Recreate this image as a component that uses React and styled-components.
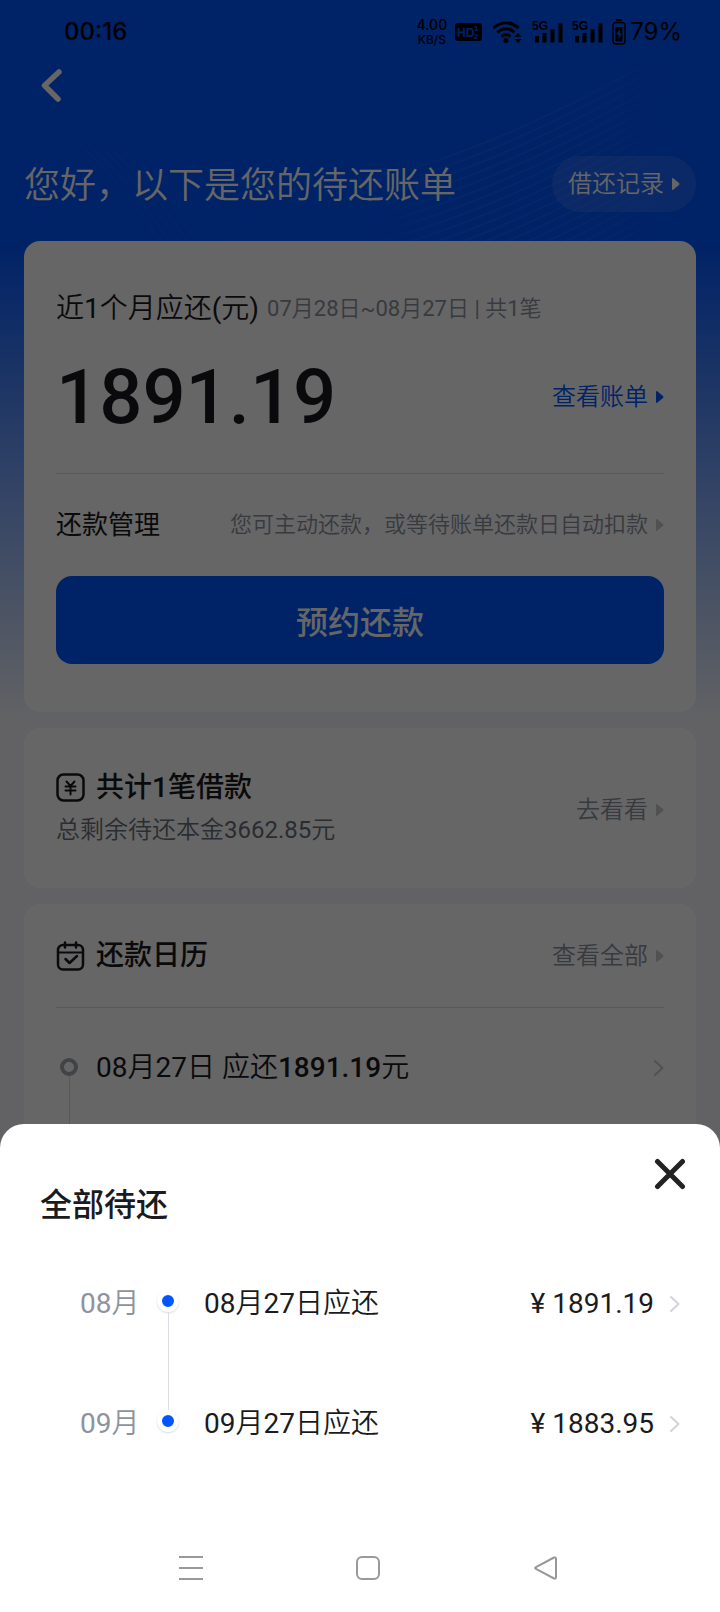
import React from "react";
import styled, { createGlobalStyle } from "styled-components";

const COLORS = {
  blue: "#0055ff",
  ink: "#1a1b20",
  grey: "#8d92a1",
  slate: "#6b6f7c",
  arrow: "#cacbd0",
  line: "#dcdde2",
};

const FONTS = {
  text: `Roboto, "Noto Sans CJK SC DemiLight", "Noto Sans CJK SC", sans-serif`,
  heading: `Roboto, "Noto Sans CJK SC", sans-serif`,
};

const PAYMENTS = [
  { month: "08月", label: "08月27日应还", amount: "1891.19" },
  { month: "09月", label: "09月27日应还", amount: "1883.95" },
];

const RIGHT_WAVES = Array.from({ length: 20 }, (_, i) => i * 9);
const LEFT_WAVES = Array.from({ length: 5 }, (_, i) => i * 9);

const Waves = () => (
  <WaveSvg viewBox="0 0 720 241" preserveAspectRatio="xMaxYMin slice" aria-hidden="true">
    <defs>
      <linearGradient id="fade" gradientUnits="userSpaceOnUse" x1="340" y1="0" x2="690" y2="0">
        <stop offset="0" stopColor="#fff" stopOpacity="0" />
        <stop offset="0.4" stopColor="#fff" stopOpacity="0.07" />
        <stop offset="0.7" stopColor="#fff" stopOpacity="0.06" />
        <stop offset="1" stopColor="#fff" stopOpacity="0" />
      </linearGradient>
    </defs>
    {RIGHT_WAVES.map((d) => (
      <path
        key={d}
        d={`M340 ${188 + d} C440 ${166 + d} 540 ${126 + d} 690 ${40 + d}`}
        fill="none"
        stroke="url(#fade)"
        strokeWidth="2"
      />
    ))}
    {LEFT_WAVES.map((d) => (
      <path
        key={d}
        d={`M${80 + d} 145 Q${120 + d} 180 ${160 + d} 241`}
        fill="none"
        stroke="#fff"
        strokeOpacity="0.03"
        strokeWidth="2"
      />
    ))}
  </WaveSvg>
);

const Signal = () => (
  <svg width="32" height="24" viewBox="0 0 32 24" aria-hidden="true">
    <text x="0" y="10" fontSize="12" fontWeight="700" fontFamily="Liberation Sans, sans-serif">5G</text>
    <path d="M5 22.500V16M12.500 22.500V13M20.500 22.500V9.500M28.500 22.500V3.500" stroke="#000" strokeWidth="4" />
  </svg>
);

const Triangle = () => (
  <svg width="8" height="14" viewBox="0 0 8 14" aria-hidden="true">
    <path d="M0 2v10q0 1.500 1.500.5l5.500-4.500q1-1 0-2L1.500 1.500Q0 .5 0 2z" fill="currentColor" />
  </svg>
);

const Chevron = () => (
  <svg width="10" height="18" viewBox="0 0 10 18" aria-hidden="true">
    <path d="M1 2l7.500 7L1 16" fill="none" stroke="currentColor" strokeWidth="2" strokeLinecap="round" strokeLinejoin="round" />
  </svg>
);

const App = () => (
  <>
    <GlobalStyle />
    <Page>
      <Waves />
      <StatusBar>
        <Clock>00:16</Clock>
        <StatusIcons>
          <Speed>
            <b>4.00</b>
            <span>KB/S</span>
          </Speed>
          <svg width="27" height="18" viewBox="0 0 27 18" aria-hidden="true">
            <rect width="27" height="18" rx="3" />
            <g fill="#0055ff" fontFamily="Liberation Sans, sans-serif" fontWeight="700">
              <text x="2" y="14" fontSize="12">HD</text>
              <text x="19" y="8" fontSize="8">1</text>
              <text x="19" y="16" fontSize="8">2</text>
            </g>
          </svg>
          <Wifi width="30" height="24" viewBox="0 0 30 24" aria-hidden="true">
            <path d="M1.500 8Q14 -2.500 26.500 8M5.500 12.500Q14 5 22.500 12.500M9.500 16.500Q14 13 18.500 16.500" fill="none" stroke="#000" strokeWidth="3" />
            <circle cx="14" cy="20.500" r="2.500" />
            <path d="M22.500 17l3.500-4 3.500 4zM22.500 19l3.500 4 3.500-4z" />
          </Wifi>
          <Signal />
          <Signal />
          <svg width="14" height="26" viewBox="0 0 14 26" aria-hidden="true">
            <path d="M4 1h6" stroke="#000" strokeWidth="2" />
            <rect x="1" y="3.500" width="12" height="21.500" rx="3" fill="none" stroke="#000" strokeWidth="1.500" />
            <rect x="3.500" y="8" width="7" height="14.500" rx="1" />
            <path d="M8 10l-4 5.500h2.500V20l4-5.500H8z" fill="#0055ff" />
          </svg>
          <Battery>79%</Battery>
        </StatusIcons>
      </StatusBar>

      <NavBar>
        <IconButton aria-label="返回">
          <svg width="24" height="36" viewBox="0 0 24 36" aria-hidden="true">
            <path d="M19 4L4.500 17.500l13.500 13.500" fill="none" stroke="#fff" strokeWidth="5.500" strokeLinecap="round" strokeLinejoin="round" />
          </svg>
        </IconButton>
      </NavBar>

      <Header>
        <Greeting>您好，以下是您的待还账单</Greeting>
        <Pill href="#records">
          借还记录
          <Triangle />
        </Pill>
      </Header>

      <Cards>
        <Card>
          <Summary>
            <Label>近1个月应还(元)</Label>
            <Period>07月28日~08月27日 | 共1笔</Period>
          </Summary>
          <AmountRow>
            <Amount>1891.19</Amount>
            <MoreLink href="#bill" $color={COLORS.blue}>
              查看账单
              <Triangle />
            </MoreLink>
          </AmountRow>
          <Divider />
          <ManageRow>
            <ManageTitle>还款管理</ManageTitle>
            <MoreLink href="#manage" $small>
              您可主动还款，或等待账单还款日自动扣款
              <Arrow><Triangle /></Arrow>
            </MoreLink>
          </ManageRow>
          <PrimaryButton>预约还款</PrimaryButton>
        </Card>

        <LoanCard>
          <div>
            <CardTitle>
              <svg width="30" height="30" viewBox="0 0 30 30" aria-hidden="true">
                <g fill="none" stroke="currentColor" strokeWidth="2.500" strokeLinecap="round">
                  <rect x="1.500" y="1.500" width="26" height="26" rx="6" />
                  <path d="M10.500 8.500l4 4.500 4-4.500M14.500 13v8.500M9.500 13.500h10M9.500 17.500h10" strokeWidth="2" />
                </g>
              </svg>
              共计1笔借款
            </CardTitle>
            <LoanRest>总剩余待还本金3662.85元</LoanRest>
          </div>
          <MoreLink href="#loans">
            去看看
            <Arrow><Triangle /></Arrow>
          </MoreLink>
        </LoanCard>

        <CalendarCard>
          <CalendarHead>
            <CardTitle>
              <svg width="30" height="30" viewBox="0 0 30 30" aria-hidden="true">
                <g fill="none" stroke="currentColor" strokeWidth="2.500" strokeLinecap="round" strokeLinejoin="round">
                  <rect x="2" y="4" width="25" height="24.500" rx="5" />
                  <path d="M2 11.500h25" strokeWidth="2" />
                  <path d="M9 1.500v5M20 1.500v5M9.500 18l4 4 7.500-7" />
                </g>
              </svg>
              还款日历
            </CardTitle>
            <MoreLink href="#all">
              查看全部
              <Arrow><Triangle /></Arrow>
            </MoreLink>
          </CalendarHead>
          <Divider />
          <DueItem>
            <Rail>
              <Ring />
            </Rail>
            <DueText>
              08月27日 应还<b>1891.19</b>元
            </DueText>
            <Arrow><Chevron /></Arrow>
          </DueItem>
        </CalendarCard>
      </Cards>
    </Page>

    <Overlay />

    <Sheet role="dialog" aria-labelledby="sheet-title">
      <SheetHeader>
        <SheetTitle id="sheet-title">全部待还</SheetTitle>
        <IconButton aria-label="关闭">
          <svg width="32" height="32" viewBox="0 0 32 32" aria-hidden="true">
            <path d="M3.500 3.500l25 25M28.500 3.500l-25 25" stroke="#222" strokeWidth="5" strokeLinecap="round" />
          </svg>
        </IconButton>
      </SheetHeader>
      <PaymentList>
        {PAYMENTS.map(({ month, label, amount }) => (
          <Payment key={month}>
            <Month>{month}</Month>
            <DotRail>
              <Dot />
            </DotRail>
            <PaymentName>{label}</PaymentName>
            <span>¥ {amount}</span>
            <PaymentArrow><Chevron /></PaymentArrow>
          </Payment>
        ))}
      </PaymentList>
      <SystemNav>
        <IconButton aria-label="菜单">
          <svg width="26" height="26" viewBox="0 0 26 26" aria-hidden="true">
            <path d="M1 2h24M1 13h24M1 24h24" stroke="#999" strokeWidth="2" />
          </svg>
        </IconButton>
        <IconButton aria-label="主页">
          <svg width="26" height="26" viewBox="0 0 26 26" aria-hidden="true">
            <rect x="2" y="2" width="22" height="22" rx="5" fill="none" stroke="#999" strokeWidth="2" />
          </svg>
        </IconButton>
        <IconButton aria-label="上一页">
          <svg width="26" height="26" viewBox="0 0 26 26" aria-hidden="true">
            <path d="M21 2.500L3 12q-1.500 1 0 2l18 9.500q2 .5 2-1.500V4q0-2-2-1.500z" fill="none" stroke="#999" strokeWidth="2" />
          </svg>
        </IconButton>
      </SystemNav>
    </Sheet>
  </>
);

const GlobalStyle = createGlobalStyle`
  * {
    box-sizing: border-box;
  }

  body {
    margin: 0;
    color: ${COLORS.ink};
    font-family: ${FONTS.text};
    font-size: 28px;
    line-height: 40px;
  }

  svg {
    display: block;
    flex: none;
  }
`;

const Page = styled.div`
  position: relative;
  display: flex;
  flex-direction: column;
  min-height: 100vh;
  background: linear-gradient(${COLORS.blue} 240px, #f5f6fa 720px);
`;

const WaveSvg = styled.svg`
  position: absolute;
  top: 0;
  right: 0;
  width: 100%;
  height: 241px;
`;

const StatusBar = styled.div`
  display: flex;
  align-items: center;
  justify-content: space-between;
  height: 64px;
  padding: 0 38px 0 64px;
  color: #000;
  font-family: Inter, sans-serif;
  font-size: 24px;
`;

const Clock = styled.span`
  font-weight: 500;
`;

const StatusIcons = styled.div`
  display: flex;
  align-items: center;
  gap: 8px;
`;

const Speed = styled.div`
  display: flex;
  flex-direction: column;
  align-items: center;
  font-size: 12px;
  font-weight: 500;
  line-height: 14px;

  b {
    font-size: 14px;
    font-weight: 500;
    line-height: 16px;
  }
`;

const Wifi = styled.svg`
  margin: 0 2px;
`;

const Battery = styled.span`
  margin-left: -4px;
`;

const NavBar = styled.nav`
  display: flex;
  align-items: center;
  height: 44px;
  padding: 0 40px;
`;

const IconButton = styled.button`
  display: flex;
  padding: 0;
  border: none;
  background: none;
  cursor: pointer;
`;

const Header = styled.header`
  display: flex;
  align-items: center;
  justify-content: space-between;
  padding: 48px 24px 29px;
  color: #fff;
`;

const Greeting = styled.h1`
  margin: 0;
  padding-top: 4px;
  font-size: 36px;
  font-weight: 400;
  line-height: 52px;
`;

const Pill = styled.a`
  display: flex;
  align-items: center;
  gap: 8px;
  height: 56px;
  padding: 0 16px;
  border-radius: 28px;
  background: rgba(255, 255, 255, 0.1);
  color: #fff;
  font-size: 24px;
  text-decoration: none;
`;

const Cards = styled.main`
  position: relative;
  display: flex;
  flex: 1;
  flex-direction: column;
  gap: 16px;
  padding: 0 24px;
`;

const Card = styled.section`
  padding: 48px 32px;
  border-radius: 16px;
  background: #fff;
`;

const Summary = styled.div`
  display: flex;
  align-items: center;
  gap: 8px;
`;

const Label = styled.span`
  color: ${COLORS.ink};
`;

const Period = styled.span`
  color: ${COLORS.grey};
  font-size: 22px;
`;

const AmountRow = styled.div`
  display: flex;
  align-items: center;
  justify-content: space-between;
  height: 96px;
  margin: 20px 0 28px;
`;

const Amount = styled.strong`
  font-size: 76px;
  font-weight: 500;
  line-height: 96px;
`;

const MoreLink = styled.a`
  display: flex;
  align-items: center;
  gap: 8px;
  color: ${({ $color }) => $color || COLORS.grey};
  font-size: ${({ $small }) => ($small ? "22px" : "24px")};
  text-decoration: none;
`;

const Arrow = styled.span`
  display: flex;
  color: ${COLORS.arrow};
`;

const Divider = styled.hr`
  width: 100%;
  height: 1px;
  margin: 0;
  border: none;
  background: ${COLORS.line};
`;

const ManageRow = styled.div`
  display: flex;
  align-items: center;
  justify-content: space-between;
  height: 102px;
`;

const ManageTitle = styled.h2`
  margin: 0;
  font-family: ${FONTS.heading};
  font-size: 26px;
  font-weight: 400;
`;

const PrimaryButton = styled.button`
  width: 100%;
  height: 88px;
  border: none;
  border-radius: 16px;
  background: ${COLORS.blue};
  color: #fff;
  font-family: ${FONTS.heading};
  font-size: 32px;
  font-weight: 500;
  cursor: pointer;
`;

const LoanCard = styled(Card)`
  display: flex;
  align-items: center;
  justify-content: space-between;
  padding: 40px 32px 36px;
`;

const CardTitle = styled.h2`
  display: flex;
  align-items: center;
  gap: 10px;
  margin: 0;
  font-family: ${FONTS.heading};
  font-size: 28px;
  font-weight: 500;
`;

const LoanRest = styled.p`
  margin: 0;
  color: ${COLORS.slate};
  font-size: 24px;
  line-height: 44px;
`;

const CalendarCard = styled(Card)`
  display: flex;
  flex: 1;
  flex-direction: column;
  padding: 0 32px;
`;

const CalendarHead = styled.div`
  display: flex;
  align-items: center;
  justify-content: space-between;
  height: 103px;
`;

const DueItem = styled.div`
  display: flex;
  flex: 1;
  gap: 14px;
  padding-top: 40px;

  > ${Arrow} {
    height: 40px;
    align-items: center;
  }
`;

const Rail = styled.div`
  display: flex;
  flex-direction: column;
  align-items: center;
  width: 26px;
  padding-top: 10px;

  &::after {
    content: "";
    flex: 1;
    width: 1px;
    background: ${COLORS.line};
  }
`;

const Ring = styled.span`
  width: 18px;
  height: 18px;
  border: 4px solid #a4a7b0;
  border-radius: 50%;
`;

const DueText = styled.span`
  flex: 1;

  b {
    font-weight: 500;
  }
`;

const Overlay = styled.div`
  position: fixed;
  inset: 0;
  background: rgba(0, 0, 0, 0.6);
`;

const Sheet = styled.section`
  position: fixed;
  right: 0;
  bottom: 0;
  left: 0;
  border-radius: 24px 24px 0 0;
  background: #fff;
`;

const SheetHeader = styled.div`
  display: flex;
  align-items: flex-start;
  justify-content: space-between;
  padding: 34px 34px 0 40px;
`;

const SheetTitle = styled.h2`
  margin: 0;
  padding-top: 27px;
  font-family: ${FONTS.heading};
  font-size: 32px;
  font-weight: 500;
`;

const PaymentList = styled.ul`
  margin: 0;
  padding: 59px 40px 0 80px;
  list-style: none;
`;

const Payment = styled.li`
  display: flex;
  height: 120px;
`;

const Month = styled.span`
  width: 60px;
  color: ${COLORS.grey};
`;

const DotRail = styled.div`
  display: flex;
  flex-direction: column;
  align-items: center;
  width: 56px;
  padding-top: 6px;

  ${Payment}:not(:last-child) &::after {
    content: "";
    flex: none;
    width: 1px;
    height: 98px;
    background: ${COLORS.line};
  }
`;

const Dot = styled.span`
  flex: none;
  width: 22px;
  height: 22px;
  border: 5px solid #fff;
  border-radius: 50%;
  background: ${COLORS.blue};
  box-shadow: 0 1px 2px rgba(60, 70, 140, 0.2);
`;

const PaymentName = styled.span`
  flex: 1;
  padding-left: 8px;
`;

const PaymentArrow = styled(Arrow)`
  align-items: center;
  height: 40px;
  margin-left: 16px;
  color: #d3d4da;
`;

const SystemNav = styled.nav`
  display: flex;
  align-items: center;
  justify-content: space-around;
  height: 88px;
  padding: 0 85px 0 102px;
`;

export default App;
